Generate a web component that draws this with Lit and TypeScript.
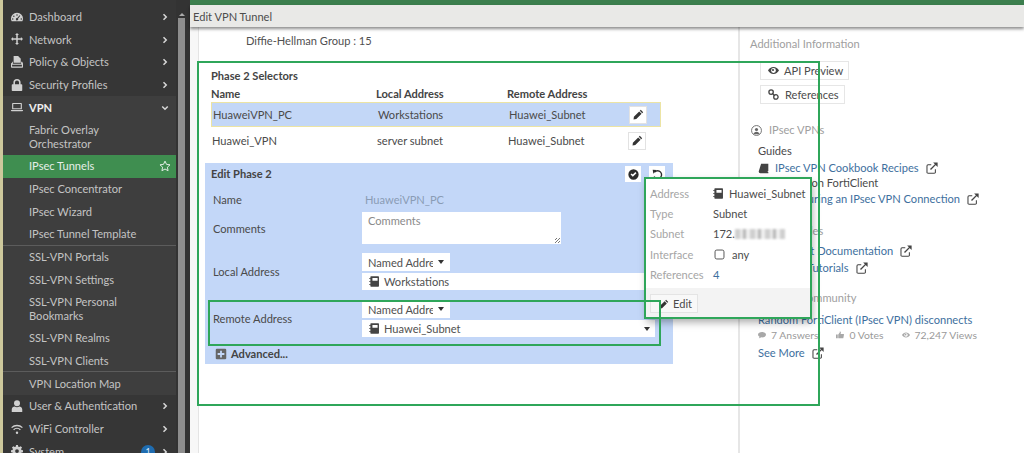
import { LitElement, html, css, svg } from 'lit';
import { customElement } from 'lit/decorators.js';

const ic = (d: unknown, box = '0 0 16 16') =>
  html`<svg class="ic" viewBox=${box} fill="currentColor">${d}</svg>`;

const icons: Record<string, unknown> = {
  gauge: ic(svg`<path fill-rule="evenodd" d="M8 2.500a7.600 7.600 0 0 0-8 7.700c0 1.300.3 2.300.9 3.300h14.200c.6-1 .9-2 .9-3.300a7.600 7.600 0 0 0-8-7.700zM8 4.200a1 1 0 1 1 0 2 1 1 0 0 1 0-2zM3.800 6a1 1 0 1 1 0 2 1 1 0 0 1 0-2zM2.300 9.500a1 1 0 1 1 0 2 1 1 0 0 1 0-2zM13.700 9.500a1 1 0 1 1 0 2 1 1 0 0 1 0-2zM11.500 5.800l.9.5L9.300 10.200a1.500 1.500 0 1 1-1.200-.7z"/>`),
  move: ic(svg`<path d="M8 0l2.600 2.800H9V7h4.200V5.400L16 8l-2.800 2.600V9H9v4.200h1.600L8 16l-2.600-2.800H7V9H2.800v1.600L0 8l2.800-2.600V7H7V2.800H5.400z"/>`),
  policy: ic(svg`<path d="M3.500 0h6L13 3.500V9H3.500z"/><path d="M1.500 8.500v-1h1v2.800h11V7.500h1.500L16 10v4.500a1 1 0 0 1-1 1H1a1 1 0 0 1-1-1V10zM1.500 11.500v2.500h13v-2.500z" fill-rule="evenodd"/>`),
  lock: ic(svg`<path fill-rule="evenodd" d="M8 0a4.800 4.800 0 0 0-4.800 4.800V7H2a1 1 0 0 0-1 1v7a1 1 0 0 0 1 1h12a1 1 0 0 0 1-1V8a1 1 0 0 0-1-1h-1.200V4.800A4.800 4.800 0 0 0 8 0zM5.300 7V4.800a2.700 2.700 0 0 1 5.400 0V7z"/>`),
  laptop: ic(svg`<path fill-rule="evenodd" d="M2.500 2.500h11a1 1 0 0 1 1 1v7.500h-13V3.500a1 1 0 0 1 1-1zM3 4v5.500h10V4z"/><path d="M0 12h16v.8a1 1 0 0 1-1 1H1a1 1 0 0 1-1-1z"/>`),
  user: ic(svg`<circle cx="8" cy="4.200" r="4"/><path d="M1 16v-3.300C1 10.300 3 8.800 5 8.800c.8.600 1.900 1 3 1s2.200-.4 3-1c2 0 4 1.500 4 3.900V16z"/>`),
  wifi: ic(svg`<circle cx="8" cy="13" r="1.600"/><g fill="none" stroke="currentColor" stroke-width="1.700"><path d="M.8 6.200a10.500 10.500 0 0 1 14.400 0"/><path d="M3.500 9a6.600 6.600 0 0 1 9 0"/></g>`),
  cog: ic(svg`<path fill-rule="evenodd" d="M6.700 0h2.600l.4 2.200 1.300.6 1.900-1.300 1.800 1.800-1.300 1.900.6 1.300 2 .4v2.600l-2 .4-.6 1.300 1.300 1.900-1.800 1.800-1.900-1.300-1.300.6-.4 2.200H6.700l-.4-2.200-1.300-.6-1.900 1.300-1.800-1.800 1.300-1.900-.6-1.300-2-.4V6.900l2-.4.6-1.300-1.300-1.900 1.800-1.800L5 2.800l1.300-.6zM8 5.500a2.500 2.500 0 1 0 0 5 2.500 2.500 0 0 0 0-5z"/>`),
  star: ic(svg`<path fill="none" stroke="currentColor" stroke-width="1.300" stroke-linejoin="round" d="M8 1.500l2 4.300 4.700.6-3.500 3.200.9 4.700L8 12l-4.100 2.300.9-4.700L1.300 6.400 6 5.800z"/>`),
  right: ic(svg`<path fill="none" stroke="currentColor" stroke-width="3" d="M5 2.500L10.500 8 5 13.500"/>`),
  down: ic(svg`<path fill="none" stroke="currentColor" stroke-width="3" d="M2.500 5L8 10.500 13.500 5"/>`),
  pencil: ic(svg`<path d="M11.300 1.200l3.500 3.500-1.400 1.400L9.900 2.600zM9 3.500L12.500 7l-7.700 7.700L.8 15.200l.5-4z"/>`),
  check: ic(svg`<path fill-rule="evenodd" d="M8 .5a7.500 7.500 0 1 0 0 15 7.500 7.500 0 0 0 0-15zM3.700 8l1.600-1.600L7 8.100l3.700-3.700 1.600 1.600L7 11.300z"/>`),
  undo: ic(svg`<path fill="none" stroke="currentColor" stroke-width="2" d="M3.800 4.500A5.800 5.800 0 1 1 3 11"/><path d="M1 1.200L6.800 1.500 2 7z"/>`),
  book: ic(svg`<path fill-rule="evenodd" d="M3 .5h10.500a1 1 0 0 1 1 1v13a1 1 0 0 1-1 1H3a1 1 0 0 1-1-1v-13a1 1 0 0 1 1-1zM5 3v4h7.500V3z"/><path d="M.5 3h2v1.200h-2zM.5 7.400h2v1.200h-2zM.5 11.800h2V13h-2z"/>`),
  manual: ic(svg`<path d="M4.500 1H15v10.500L13.500 13H15v2H3.500A2.500 2.500 0 0 1 1 12.500z"/>`),
  plus: ic(svg`<path fill-rule="evenodd" d="M2.500 1h11A1.500 1.500 0 0 1 15 2.500v11a1.500 1.500 0 0 1-1.500 1.500h-11A1.500 1.500 0 0 1 1 13.500v-11A1.500 1.500 0 0 1 2.500 1zM6.800 3.500v3.300H3.500v2.400h3.300v3.300h2.400V9.200h3.300V6.800H9.200V3.500z"/>`),
  ext: ic(svg`<path fill="none" stroke="currentColor" stroke-width="1.400" d="M12.500 9.500v4a1.500 1.500 0 0 1-1.500 1.500H2.800a1.500 1.500 0 0 1-1.500-1.500V5.200a1.500 1.500 0 0 1 1.500-1.500H7"/><path fill="none" stroke="currentColor" stroke-width="1.800" d="M6 10L13.500 2.500"/><path d="M9.500 .6H15.500V6.600z"/>`),
  eye: ic(svg`<path fill-rule="evenodd" d="M8 3C4.500 3 1.700 5.200 0 8c1.700 2.800 4.500 5 8 5s6.300-2.200 8-5c-1.700-2.800-4.500-5-8-5zM8 4.500a3.500 3.500 0 1 1 0 7 3.500 3.500 0 0 1 0-7z"/><circle cx="7.300" cy="7.300" r="1.600"/>`),
  link: ic(svg`<g fill="none" stroke="currentColor" stroke-width="1.900"><circle cx="4.500" cy="4.500" r="3.200"/><circle cx="11.500" cy="11.500" r="3.200"/><path d="M6 6l4 4"/></g>`),
  comment: ic(svg`<path d="M8 2c4.300 0 8 2.300 8 5.400s-3.700 5.400-8 5.400c-.7 0-1.300-.1-1.900-.2C5 13.700 3.500 14.500 1.500 14.500c.8-.8 1.400-2 1.500-3.200C1.200 10.400 0 9 0 7.400 0 4.300 3.700 2 8 2z"/>`),
  thumb: ic(svg`<path d="M0 7h3.500v7.500H0zM4.500 7.200L7.500 3V1c1.500 0 2.300 1 2.300 2.300L9.200 6H15a1 1 0 0 1 1 1.200l-1.200 6.300a1 1 0 0 1-1 1H4.500z"/>`),
  person: ic(svg`<g fill="none" stroke="currentColor" stroke-width="1.300"><circle cx="8" cy="8" r="7.200"/></g><circle cx="8" cy="6.500" r="2.300"/><path d="M3.800 13.500c0-2.500 1.800-3.700 4.200-3.700s4.200 1.200 4.200 3.700z"/>`),
  box: ic(svg`<rect x="1.500" y="1.500" width="13" height="13" rx="2.500" fill="none" stroke="currentColor" stroke-width="1.300"/>`),
};

type NavItem = {
  label: string;
  icon?: string;
  arrow?: string;
  sub?: boolean;
  active?: boolean;
  line?: boolean;
  bold?: boolean;
  badge?: string;
};

const nav: NavItem[] = [
  { label: 'Dashboard', icon: 'gauge', arrow: 'right' },
  { label: 'Network', icon: 'move', arrow: 'right' },
  { label: 'Policy & Objects', icon: 'policy', arrow: 'right' },
  { label: 'Security Profiles', icon: 'lock', arrow: 'right' },
  { label: 'VPN', icon: 'laptop', arrow: 'down', bold: true, sub: true },
  { label: 'Fabric Overlay Orchestrator', sub: true },
  { label: 'IPsec Tunnels', sub: true, active: true },
  { label: 'IPsec Concentrator', sub: true },
  { label: 'IPsec Wizard', sub: true },
  { label: 'IPsec Tunnel Template', sub: true, line: true },
  { label: 'SSL-VPN Portals', sub: true },
  { label: 'SSL-VPN Settings', sub: true },
  { label: 'SSL-VPN Personal Bookmarks', sub: true },
  { label: 'SSL-VPN Realms', sub: true },
  { label: 'SSL-VPN Clients', sub: true, line: true },
  { label: 'VPN Location Map', sub: true },
  { label: 'User & Authentication', icon: 'user', arrow: 'right' },
  { label: 'WiFi Controller', icon: 'wifi', arrow: 'right' },
  { label: 'System', icon: 'cog', arrow: 'right', badge: '1' },
];

@customElement('app-root')
export class AppRoot extends LitElement {
  static styles = css`
    :host {
      display: block;
      width: 1024px;
      height: 453px;
      overflow: hidden;
      position: relative;
      background: #fff;
      font-family: Lato, "Open Sans", sans-serif;
      font-size: 11.100px;
      color: #4a4a4a;
    }
    .ic {
      width: 1em;
      height: 1em;
      flex: none;
      display: block;
    }
    .page {
      display: flex;
      height: 453px;
    }
    .strip {
      width: 3px;
      flex: none;
      background: #cdc89c;
    }
    .side {
      width: 173px;
      flex: none;
      height: 453px;
      overflow: hidden;
      background: #363636;
      padding-top: 5.700px;
      box-sizing: border-box;
      color: #c4c4c4;
    }
    .item {
      display: flex;
      align-items: center;
      min-height: 22.680px;
      box-sizing: border-box;
      padding: 0 7px 0 26px;
      line-height: 14px;
      position: relative;
    }
    .item.sub {
      background: #3e3e3e;
    }
    .item.bold {
      color: #eee;
      font-weight: 700;
    }
    .item.active {
      background: #3f8e50;
      color: #e6efe8;
    }
    .item.line {
      border-bottom: 1px solid #5c5c5c;
    }
    .item.wrap {
      padding-top: 4px;
      padding-bottom: 4px;
      padding-right: 30px;
    }
    .item .lead {
      position: absolute;
      left: 8px;
      top: 5px;
      font-size: 12px;
      color: #d0d0d0;
    }
    .item .label {
      flex: 1;
    }
    .item .arrow {
      font-size: 8px;
      color: #d8d8d8;
    }
    .item .star {
      font-size: 12px;
      margin-right: -2px;
    }
    .badge {
      width: 14px;
      height: 14px;
      border-radius: 50%;
      background: #1f6cb0;
      color: #dfeaf5;
      font-size: 9px;
      line-height: 14px;
      text-align: center;
      margin-right: 6px;
    }
    .scroll {
      width: 14px;
      flex: none;
      background: #333;
      display: flex;
      flex-direction: column;
      padding: 13px 5px 0 2px;
      box-sizing: border-box;
    }
    .scroll .up {
      width: 0;
      height: 0;
      margin: 0 0 2px .5px;
      border: 3px solid transparent;
      border-top: 0;
      border-bottom: 3px solid #aaa;
    }
    .scroll .thumb {
      flex: 1;
      background: #8e8e8e;
    }
    .right-area {
      flex: 1;
      display: flex;
      flex-direction: column;
      min-width: 0;
    }
    .topgreen {
      height: 5px;
      background: #3c7f4e;
      flex: none;
    }
    .title {
      height: 22px;
      flex: none;
      background: #e9e9e7;
      box-shadow: 0 2px 3px rgba(0, 0, 0, .45);
      padding-left: 3px;
      line-height: 23px;
      color: #4c4c4c;
      position: relative;
      z-index: 1;
    }
    .body {
      flex: 1;
      display: flex;
      min-height: 0;
    }
    .gutter {
      width: 8px;
      flex: none;
      background: #f7f7f7;
      border-right: 1px solid #e4e4e4;
    }
    .form {
      width: 533px;
      flex: none;
      border-right: 2px solid #e6e6e6;
      padding: 6px 0 0 6px;
      box-sizing: content-box;
    }
    .dh {
      padding-left: 41px;
      line-height: 16px;
      margin-bottom: 19px;
      color: #505050;
    }
    .sel-title {
      font-weight: 700;
      color: #444;
      padding-left: 6px;
      line-height: 16px;
      margin-bottom: 2px;
    }
    .row {
      display: grid;
      grid-template-columns: 165px 131px 122px 32px;
      align-items: center;
      margin-left: 6px;
      width: 450px;
      box-sizing: border-box;
    }
    .row.head {
      font-weight: 700;
      line-height: 16px;
      height: 16px;
      color: #444;
    }
    .row.sel {
      height: 25px;
      background: #c3d7f7;
      border: 1px solid #ece4a4;
      padding-left: 1px;
    }
    .row.plain {
      height: 27px;
      padding-left: 1px;
    }
    .pen {
      width: 18px;
      height: 18px;
      display: flex;
      align-items: center;
      justify-content: center;
      background: #fff;
      border: 1px solid #e2e2e2;
      box-sizing: border-box;
      font-size: 11px;
      color: #333;
      justify-self: start;
      margin-left: -2px;
    }
    .edit {
      width: 468px;
      height: 201px;
      margin-top: 9px;
      background: #c3d7f8;
      box-sizing: border-box;
      padding: 3px 8px 0 6px;
    }
    .edit-head {
      display: flex;
      align-items: center;
      height: 16px;
      font-weight: 700;
      color: #444;
      line-height: 16px;
    }
    .edit-head span {
      flex: 1;
    }
    .tool {
      width: 16px;
      height: 16px;
      background: #fff;
      display: flex;
      align-items: center;
      justify-content: center;
      font-size: 11px;
      color: #2c2c2c;
      margin-left: 8px;
    }
    .field {
      display: grid;
      grid-template-columns: 149px 1fr;
      align-items: center;
      padding-left: 2px;
    }
    .ctl-name {
      height: 20px;
      margin-top: 7px;
    }
    .ctl-name .val {
      color: #8a9cb5;
      padding-left: 3px;
    }
    .ctl-comments {
      margin-top: 3px;
    }
    .area {
      width: 199px;
      height: 32px;
      background: #fff;
      color: #8a8a8a;
      padding: 2px 6px;
      box-sizing: border-box;
      position: relative;
      line-height: 14px;
    }
    .area i {
      position: absolute;
      right: 1px;
      bottom: 1px;
      width: 5px;
      height: 5px;
      background: repeating-linear-gradient(135deg, transparent 0 1px, #777 1px 2px);
    }
    .ctl-addr {
      margin-top: 9px;
    }
    .ctl-addr + .ctl-addr {
      margin-top: 10px;
    }
    .select {
      width: 88px;
      height: 18px;
      background: #fff;
      display: flex;
      align-items: center;
      padding-left: 6px;
      box-sizing: border-box;
      gap: 5px;
      color: #505050;
      white-space: nowrap;
      overflow: hidden;
    }
    .select b {
      flex: none;
      width: 0;
      height: 0;
      border: 3.500px solid transparent;
      border-top: 4px solid #333;
      border-bottom: 0;
    }
    .select span {
      width: 65px;
      overflow: hidden;
      flex: none;
    }
    .input {
      height: 17px;
      width: 293px;
      margin-top: 2px;
      background: #fff;
      display: flex;
      align-items: center;
      padding: 0 5px 0 7px;
      box-sizing: border-box;
      gap: 4px;
      color: #505050;
    }
    .input .ic {
      font-size: 11px;
      color: #444;
    }
    .input span {
      flex: 1;
    }
    .input b {
      width: 0;
      height: 0;
      border: 3.500px solid transparent;
      border-top: 4px solid #333;
      border-bottom: 0;
    }
    .adv {
      display: flex;
      align-items: center;
      gap: 4px;
      margin: 10px 0 0 4px;
      font-weight: 700;
      color: #444;
      line-height: 14px;
    }
    .adv .ic {
      font-size: 12px;
      color: #666;
    }
    .info {
      flex: 1;
      padding: 9px 0 0 10px;
      min-width: 0;
    }
    .gray {
      color: #a0a0a0;
      line-height: 16px;
    }
    .btn {
      display: flex;
      align-items: center;
      gap: 5px;
      width: max-content;
      height: 19px;
      padding: 0 5px 0 7px;
      border: 1px solid #e6e6e6;
      box-sizing: border-box;
      margin-left: 10px;
      color: #4c4c4c;
    }
    .btn .ic {
      font-size: 11px;
      color: #444;
    }
    .btn.api {
      margin-top: 9px;
    }
    .btn.refs {
      margin-top: 5px;
      gap: 6px;
    }
    .vpns {
      display: flex;
      align-items: center;
      gap: 7px;
      margin: 18px 0 0 1px;
      height: 16px;
    }
    .vpns .ic {
      font-size: 11px;
      color: #666;
    }
    .block {
      padding-left: 8px;
      line-height: 16px;
    }
    .link {
      color: #3e6f9e;
    }
    .line {
      display: flex;
      align-items: center;
      gap: 6px;
      height: 16px;
      white-space: nowrap;
    }
    .line .ext {
      font-size: 12px;
      color: #444;
      margin-left: 1px;
    }
    .line .ic.manual {
      font-size: 11px;
      color: #444;
    }
    .stats {
      display: flex;
      align-items: center;
      color: #9a9a9a;
      height: 13px;
      font-size: 10.400px;
      white-space: nowrap;
    }
    .stats .ic {
      font-size: 8px;
      color: #a8a8a8;
      margin-right: 5px;
    }
    .stats span {
      margin-right: 18px;
    }
    .pop {
      position: absolute;
      left: 645px;
      top: 178px;
      width: 165px;
      height: 140px;
      background: #fff;
      box-sizing: border-box;
      box-shadow: 2px 4px 8px rgba(0, 0, 0, .35);
      display: flex;
      flex-direction: column;
    }
    .pop-rows {
      flex: 1;
      padding: 5px 4px 0 5px;
      display: grid;
      grid-template-columns: 63px 1fr;
      grid-auto-rows: 20.300px;
      align-items: center;
      color: #4c4c4c;
    }
    .pop-rows .k {
      color: #a6a6a6;
    }
    .pop-rows .v {
      display: flex;
      align-items: center;
      gap: 5px;
      white-space: nowrap;
    }
    .pop-rows .v .ic {
      font-size: 11px;
      color: #444;
    }
    .pop-rows .v.any {
      gap: 7px;
      padding-left: 1px;
    }
    .pop-rows .v.link {
      color: #3e6f9e;
    }
    .mask {
      display: inline-block;
      width: 50px;
      height: 10px;
      margin-left: -5px;
      background: repeating-linear-gradient(90deg, #cfcfcf 0 5px, #eaeaea 5px 8px, #b8b8b8 8px 11px, #f0f0f0 11px 15px);
      filter: blur(1.200px);
    }
    .pop-foot {
      height: 30px;
      background: #f3f3f3;
      padding: 6px 0 0 5px;
      box-sizing: border-box;
    }
    .pop-foot div {
      display: flex;
      align-items: center;
      gap: 4px;
      width: 48px;
      height: 19px;
      box-sizing: border-box;
      padding-left: 8px;
      border: 1px solid #e4e4e4;
      background: #f8f8f8;
    }
    .pop-foot .ic {
      font-size: 10px;
      color: #333;
    }
    .mark {
      position: absolute;
      border: 2px solid #2fa65a;
      box-sizing: border-box;
      pointer-events: none;
    }
    .mark.big {
      left: 197px;
      top: 61px;
      width: 623px;
      height: 345px;
    }
    .mark.remote {
      left: 208px;
      top: 300px;
      width: 453px;
      height: 46px;
    }
    .mark.popm {
      left: 644px;
      top: 177px;
      width: 168px;
      height: 142px;
    }
  `;

  private renderNav(n: NavItem) {
    const wrap = n.label.length > 22 && n.sub;
    const cls = ['item', n.sub ? 'sub' : '', n.bold ? 'bold' : '', n.active ? 'active' : '',
      n.line ? 'line' : '', wrap ? 'wrap' : ''].join(' ');
    return html`<div class=${cls}>
      ${n.icon ? html`<span class="lead">${icons[n.icon]}</span>` : ''}
      <span class="label">${n.label}</span>
      ${n.badge ? html`<span class="badge">${n.badge}</span>` : ''}
      ${n.arrow ? html`<span class="arrow">${icons[n.arrow]}</span>` : ''}
      ${n.active ? html`<span class="star">${icons.star}</span>` : ''}
    </div>`;
  }

  render() {
    return html`
      <div class="page">
        <div class="strip"></div>
        <nav class="side">${nav.map((n) => this.renderNav(n))}</nav>
        <div class="scroll"><div class="up"></div><div class="thumb"></div></div>
        <div class="right-area">
          <div class="topgreen"></div>
          <div class="title">Edit VPN Tunnel</div>
          <div class="body">
            <div class="gutter"></div>
            <div class="form">
              <div class="dh">Diffie-Hellman Group : 15</div>
              <div class="sel-title">Phase 2 Selectors</div>
              <div class="row head">
                <span>Name</span><span>Local Address</span><span>Remote Address</span><span></span>
              </div>
              <div class="row sel">
                <span>HuaweiVPN_PC</span><span>Workstations</span><span>Huawei_Subnet</span>
                <span class="pen">${icons.pencil}</span>
              </div>
              <div class="row plain">
                <span>Huawei_VPN</span><span>server subnet</span><span>Huawei_Subnet</span>
                <span class="pen">${icons.pencil}</span>
              </div>
              <div class="edit">
                <div class="edit-head">
                  <span>Edit Phase 2</span>
                  <div class="tool">${icons.check}</div>
                  <div class="tool">${icons.undo}</div>
                </div>
                <div class="field ctl-name"><span>Name</span><span class="val">HuaweiVPN_PC</span></div>
                <div class="field ctl-comments">
                  <span>Comments</span>
                  <div class="area">Comments<i></i></div>
                </div>
                <div class="field ctl-addr">
                  <span>Local Address</span>
                  <div>
                    <div class="select"><span>Named Address</span><b></b></div>
                    <div class="input">${icons.book}<span>Workstations</span></div>
                  </div>
                </div>
                <div class="field ctl-addr">
                  <span>Remote Address</span>
                  <div>
                    <div class="select"><span>Named Address</span><b></b></div>
                    <div class="input">${icons.book}<span>Huawei_Subnet</span><b></b></div>
                  </div>
                </div>
                <div class="adv">${icons.plus}Advanced...</div>
              </div>
            </div>
            <aside class="info">
              <div class="gray">Additional Information</div>
              <div class="btn api">${icons.eye}API Preview</div>
              <div class="btn refs">${icons.link}References</div>
              <div class="vpns gray">${icons.person}IPsec VPNs</div>
              <div class="block">
                <div class="line" style="margin-top:5px">Guides</div>
                <div class="line" style="margin-top:1px">
                  <span class="ic manual">${icons.manual}</span>
                  <span class="link">IPsec VPN Cookbook Recipes</span><span class="ext">${icons.ext}</span>
                </div>
                <div class="line" style="margin-top:-1px">IPsec VPN on FortiClient</div>
                <div class="line">
                  <span class="link" style="margin-left:18px">Configuring an IPsec VPN Connection</span><span class="ext">${icons.ext}</span>
                </div>
                <div class="line gray" style="margin-top:16px">Other Guides</div>
                <div class="line" style="margin-top:4px">
                  <span class="link" style="margin-left:18px">Product Documentation</span><span class="ext">${icons.ext}</span>
                </div>
                <div class="line" style="margin-top:1px">
                  <span class="link" style="margin-left:18px">Video Tutorials</span><span class="ext">${icons.ext}</span>
                </div>
                <div class="line gray" style="margin-top:14px">Fortinet Community</div>
                <div class="line" style="margin-top:6px">
                  <span class="link">Random FortiClient (IPsec VPN) disconnects</span>
                </div>
                <div class="stats">
                  ${icons.comment}<span>7 Answers</span>
                  ${icons.thumb}<span>0 Votes</span>
                  ${icons.eye}<span>72,247 Views</span>
                </div>
                <div class="line" style="margin-top:4px">
                  <span class="link">See More</span><span class="ext">${icons.ext}</span>
                </div>
              </div>
            </aside>
          </div>
        </div>
      </div>

      <div class="pop">
        <div class="pop-rows">
          <span class="k">Address</span><span class="v">${icons.book}Huawei_Subnet</span>
          <span class="k">Type</span><span class="v">Subnet</span>
          <span class="k">Subnet</span><span class="v">172.<i class="mask"></i></span>
          <span class="k">Interface</span><span class="v any">${icons.box}any</span>
          <span class="k">References</span><span class="v link">4</span>
        </div>
        <div class="pop-foot"><div>${icons.pencil}Edit</div></div>
      </div>
      <div class="mark big"></div>
      <div class="mark remote"></div>
      <div class="mark popm"></div>
    `;
  }
}
